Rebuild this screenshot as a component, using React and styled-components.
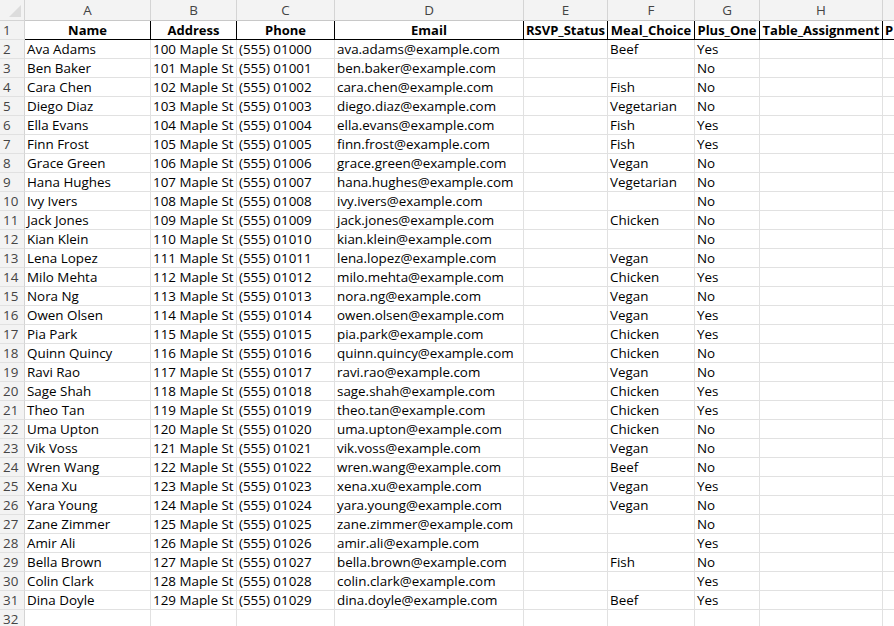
import React from 'react';
import styled, { createGlobalStyle } from 'styled-components';

const GlobalStyle = createGlobalStyle`
  html, body { margin: 0; padding: 0; background: #fff; overflow: hidden; }
  body { font-family: "Open Sans", "Liberation Sans", sans-serif; }
`;

const cols = [
  { key: 'A', w: 126 }, { key: 'B', w: 86 }, { key: 'C', w: 98 }, { key: 'D', w: 189 },
  { key: 'E', w: 84 }, { key: 'F', w: 87 }, { key: 'G', w: 65 }, { key: 'H', w: 123 }, { key: 'I', w: 40 },
];
const headers = ['Name', 'Address', 'Phone', 'Email', 'RSVP_Status', 'Meal_Choice', 'Plus_One', 'Table_Assignment', 'P'];

const names = ['Ava Adams','Ben Baker','Cara Chen','Diego Diaz','Ella Evans','Finn Frost','Grace Green','Hana Hughes','Ivy Ivers','Jack Jones','Kian Klein','Lena Lopez','Milo Mehta','Nora Ng','Owen Olsen','Pia Park','Quinn Quincy','Ravi Rao','Sage Shah','Theo Tan','Uma Upton','Vik Voss','Wren Wang','Xena Xu','Yara Young','Zane Zimmer','Amir Ali','Bella Brown','Colin Clark','Dina Doyle'];
const meals = ['Beef','','Fish','Vegetarian','Fish','Fish','Vegan','Vegetarian','','Chicken','','Vegan','Chicken','Vegan','Vegan','Chicken','Chicken','Vegan','Chicken','Chicken','Chicken','Vegan','Beef','Vegan','Vegan','','','Fish','','Beef'];
const plus = ['Yes','No','No','No','Yes','Yes','No','No','No','No','No','No','Yes','No','Yes','Yes','No','No','Yes','Yes','No','No','No','Yes','No','No','Yes','No','Yes','Yes'];

const rows = names.map((n, i) => {
  const idx = String(i).padStart(2, '0');
  return [n, `${100 + i} Maple St`, `(555) 010${idx}`,
    `${n.toLowerCase().replace(' ', '.')}@example.com`, '', meals[i], plus[i], '', ''];
});

const Sheet = styled.div`
  display: grid;
  grid-template-columns: 25px ${cols.map(c => c.w + 'px').join(' ')};
  grid-auto-rows: 19px;
  grid-template-rows: 21px 19px;
  font-size: 13.4px;
  color: #000;
`;

const Corner = styled.div`
  background: #f3f3f3;
  border-right: 1px solid #d4d4d4;
  border-bottom: 1px solid #d4d4d4;
  position: relative;
  &::after {
    content: '';
    position: absolute; right: 3px; bottom: 3px;
    border-left: 12px solid transparent;
    border-bottom: 12px solid #dcdcdc;
  }
`;

const ColHead = styled.div`
  background: #f3f3f3;
  border-right: 1px solid #d4d4d4;
  border-bottom: 1px solid #c8c8c8;
  color: #444;
  display: flex; align-items: center; justify-content: center;
`;

const RowHead = styled.div`
  background: #f3f3f3;
  border-right: 1px solid #d4d4d4;
  border-bottom: 1px solid #e1e1e1;
  color: #444;
  display: flex; align-items: center; padding-left: 3px;
`;

const Cell = styled.div`
  border-right: 1px solid ${p => (p.$head ? '#000' : '#e1e1e1')};
  border-bottom: 1px solid ${p => (p.$head ? '#000' : '#e1e1e1')};
  font-weight: ${p => (p.$head ? 700 : 400)};
  font-size: ${p => (p.$head ? '13px' : 'inherit')};
  display: flex; align-items: center;
  justify-content: ${p => (p.$left ? 'flex-start' : p.$head ? 'center' : 'flex-start')};
  padding: 0 2px;
  white-space: nowrap; overflow: hidden;
`;

export default function App() {
  return (
    <>
      <GlobalStyle />
      <Sheet>
        <Corner />
        {cols.map(c => <ColHead key={c.key}>{c.key}</ColHead>)}
        <RowHead>1</RowHead>
        {headers.map((h, i) => <Cell key={h} $head $left={i === 8}>{h}</Cell>)}
        {rows.map((r, i) => (
          <React.Fragment key={i}>
            <RowHead>{i + 2}</RowHead>
            {r.map((v, j) => <Cell key={j}>{v}</Cell>)}
          </React.Fragment>
        ))}
        <RowHead>32</RowHead>
        {cols.map(c => <Cell key={c.key} />)}
      </Sheet>
    </>
  );
}
